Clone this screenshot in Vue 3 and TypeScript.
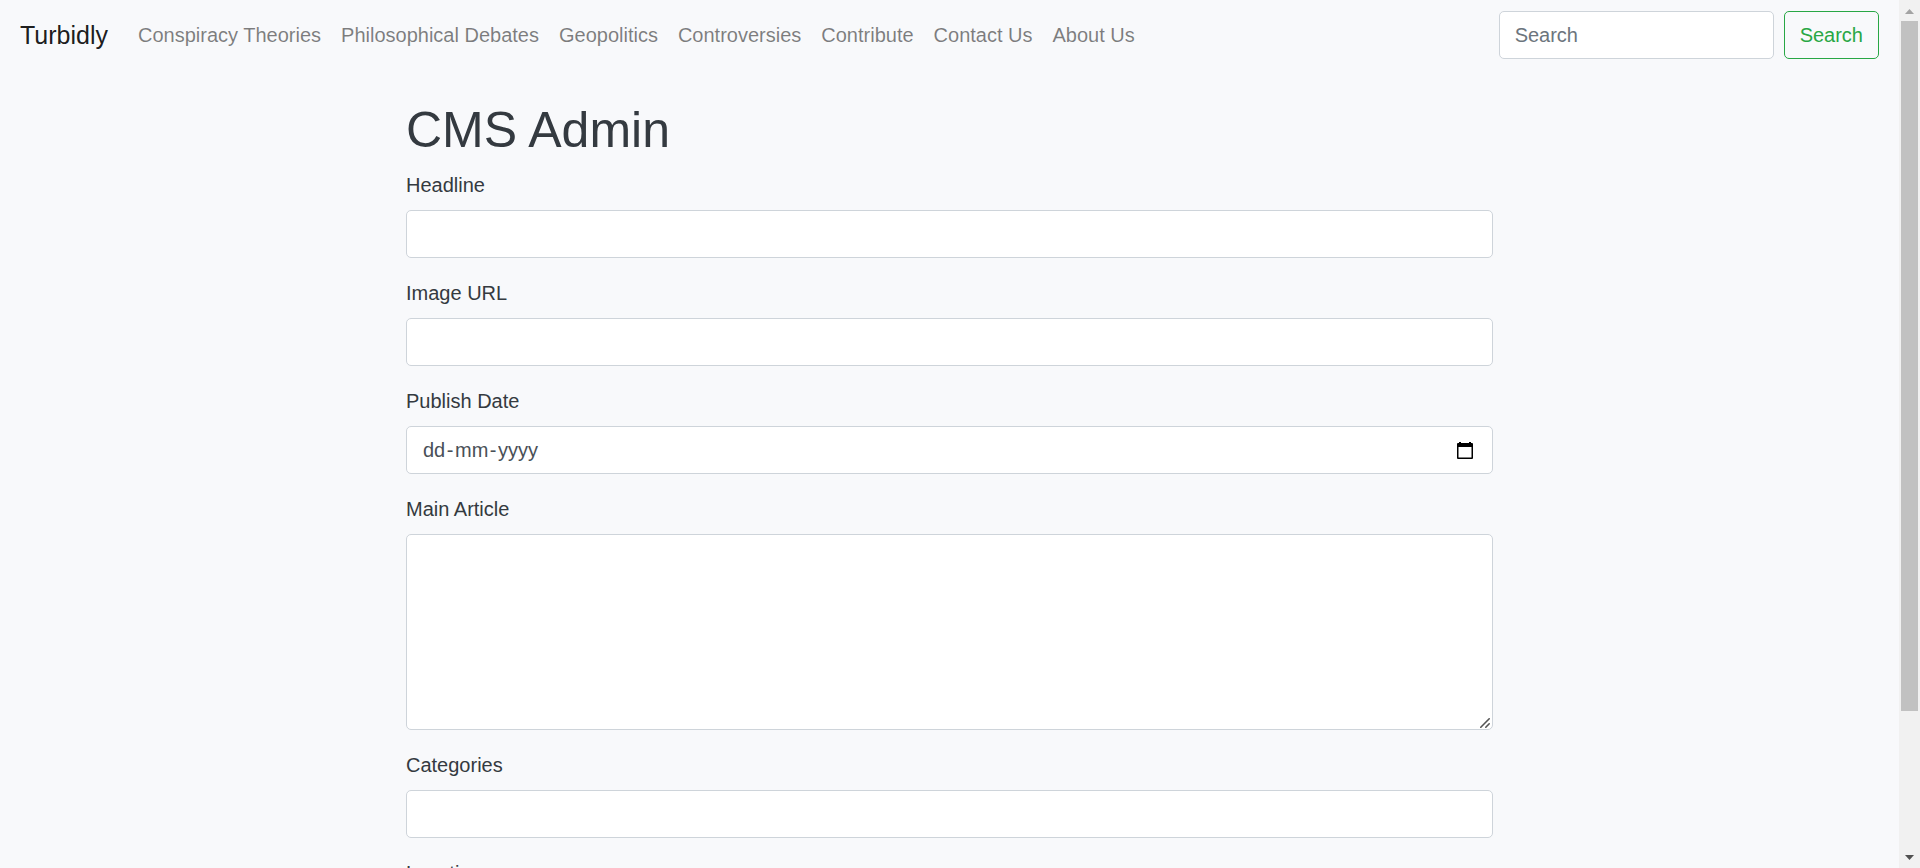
<script setup lang="ts">
import { ref } from 'vue'

interface Field {
  id: string
  label: string
  kind: 'text' | 'date' | 'area'
}

const links: string[] = [
  'Conspiracy Theories',
  'Philosophical Debates',
  'Geopolitics',
  'Controversies',
  'Contribute',
  'Contact Us',
  'About Us',
]

const fields: Field[] = [
  { id: 'headline', label: 'Headline', kind: 'text' },
  { id: 'image-url', label: 'Image URL', kind: 'text' },
  { id: 'publish-date', label: 'Publish Date', kind: 'date' },
  { id: 'main-article', label: 'Main Article', kind: 'area' },
  { id: 'categories', label: 'Categories', kind: 'text' },
  { id: 'location', label: 'Location', kind: 'text' },
]

const query = ref('')
const values = ref<Record<string, string>>({})
const date = ref({ day: '', month: '', year: '' })
</script>

<template>
  <div class="window">
    <div class="page">
      <nav class="navbar">
        <a class="brand" href="#">Turbidly</a>
        <ul class="links">
          <li v-for="link in links" :key="link"><a href="#">{{ link }}</a></li>
        </ul>
        <form class="search" @submit.prevent>
          <input v-model="query" class="control" type="search" placeholder="Search" aria-label="Search" />
          <button class="search-button" type="submit">Search</button>
        </form>
      </nav>

      <main class="content">
        <h1>CMS Admin</h1>
        <form @submit.prevent>
          <div v-for="field in fields" :key="field.id" class="group">
            <label :for="field.id">{{ field.label }}</label>
            <div v-if="field.kind === 'area'" class="area-box">
              <textarea :id="field.id" v-model="values[field.id]" class="control area" rows="6"></textarea>
              <svg class="grip" viewBox="0 0 10 10" aria-hidden="true">
                <path d="M.8 9.200L9.200.8M5.800 9.200l3.400-3.400" fill="none" stroke="#555" stroke-width="1.600" stroke-linecap="round" />
              </svg>
            </div>
            <div v-else-if="field.kind === 'date'" class="control date">
              <input :id="field.id" v-model="date.day" type="text" maxlength="2" placeholder="dd" />
              <span>-</span>
              <input v-model="date.month" class="month" type="text" maxlength="2" placeholder="mm" aria-label="Month" />
              <span>-</span>
              <input v-model="date.year" class="year" type="text" maxlength="4" placeholder="yyyy" aria-label="Year" />
              <button type="button" aria-label="Show date picker">
                <svg viewBox="0 0 16 17" width="16" height="17" aria-hidden="true">
                  <path d="M2 0h2v1h8V0h2v1h1q1 0 1 1v14q0 1-1 1H1q-1 0-1-1V2q0-1 1-1h1zM1.500 5v10.600h13V5z" fill="#000" fill-rule="evenodd" />
                </svg>
              </button>
            </div>
            <input v-else :id="field.id" v-model="values[field.id]" class="control" type="text" />
          </div>
        </form>
      </main>
    </div>

    <div class="scrollbar" aria-hidden="true">
      <svg class="arrow" viewBox="0 0 21 21"><path d="M6 14h9l-4.500-5z" fill="#a3a3a3" /></svg>
      <div class="track"><div class="thumb"></div></div>
      <svg class="arrow" viewBox="0 0 21 21"><path d="M6 8h9l-4.500 5z" fill="#505050" /></svg>
    </div>
  </div>
</template>

<style>
body {
  margin: 0;
  background: #f8f9fa;
}
</style>

<style scoped>
.window {
  display: flex;
  height: 100vh;
  overflow: hidden;
  background: #f8f9fb;
  color: #343a40;
  font-family: "Liberation Sans", Arial, sans-serif;
  font-size: 20px;
  line-height: 30px;
}

.window *,
.window *::before {
  box-sizing: border-box;
}

.page {
  flex: 1;
  min-width: 0;
  overflow-y: auto;
  scrollbar-width: none;
}

.navbar {
  display: flex;
  align-items: center;
  min-height: 70px;
  padding: 10px 20px;
}

.brand {
  margin-right: 20px;
  color: rgba(0, 0, 0, 0.9);
  font-size: 25px;
  text-decoration: none;
}

.links {
  display: flex;
  flex: 1;
  margin: 0;
  padding: 0;
  list-style: none;
}

.links a {
  display: block;
  padding: 10px;
  color: rgba(0, 0, 0, 0.5);
  text-decoration: none;
  white-space: nowrap;
}

.search {
  display: flex;
  gap: 10px;
}

.search .control {
  width: 275px;
}

.control {
  display: block;
  width: 100%;
  margin: 0;
  padding: 8px 15px;
  border: 1px solid #ced4da;
  border-radius: 5px;
  background: #fff;
  color: #495057;
  font: inherit;
  outline: none;
  appearance: none;
}

.control:focus,
.control:focus-within {
  border-color: #80bdff;
}

.control::placeholder {
  color: #6c757d;
  opacity: 1;
}

.search-button {
  padding: 8px 15px;
  border: 1px solid #28a745;
  border-radius: 5px;
  background: transparent;
  color: #28a745;
  font: inherit;
  cursor: pointer;
}

.content {
  max-width: 1087px;
  margin: 30px auto 0;
  padding-bottom: 70px;
}

h1 {
  margin: 0 0 10px;
  font-size: 50px;
  font-weight: 400;
  line-height: 60px;
}

.group {
  margin-bottom: 20px;
}

label {
  display: block;
  width: fit-content;
  margin-bottom: 10px;
}

.area-box {
  position: relative;
}

.area {
  padding: 7px 15px;
  resize: vertical;
}

.area::-webkit-resizer {
  background: transparent;
}

.grip {
  position: absolute;
  right: 3px;
  bottom: 2px;
  width: 10px;
  height: 10px;
  pointer-events: none;
}

.date {
  display: flex;
  align-items: center;
  padding-right: 19px;
}

.date input {
  width: 24px;
  padding: 0 0 0 1px;
  border: 0;
  background: transparent;
  color: inherit;
  font: inherit;
  outline: none;
}

.date .month {
  width: 35px;
}

.date .year {
  width: 42px;
}

.date span {
  width: 8px;
  text-align: center;
}

.date input::placeholder {
  color: #495057;
  opacity: 1;
}

.date button {
  display: flex;
  margin-left: auto;
  padding: 0;
  border: 0;
  background: transparent;
}

.scrollbar {
  display: flex;
  flex: none;
  flex-direction: column;
  width: 21px;
  background: #f1f1f1;
}

.arrow {
  display: block;
  width: 21px;
  height: 21px;
}

.track {
  flex: 1;
  padding: 0 2px;
}

.thumb {
  height: 83.5%;
  background: #c1c1c1;
}
</style>
